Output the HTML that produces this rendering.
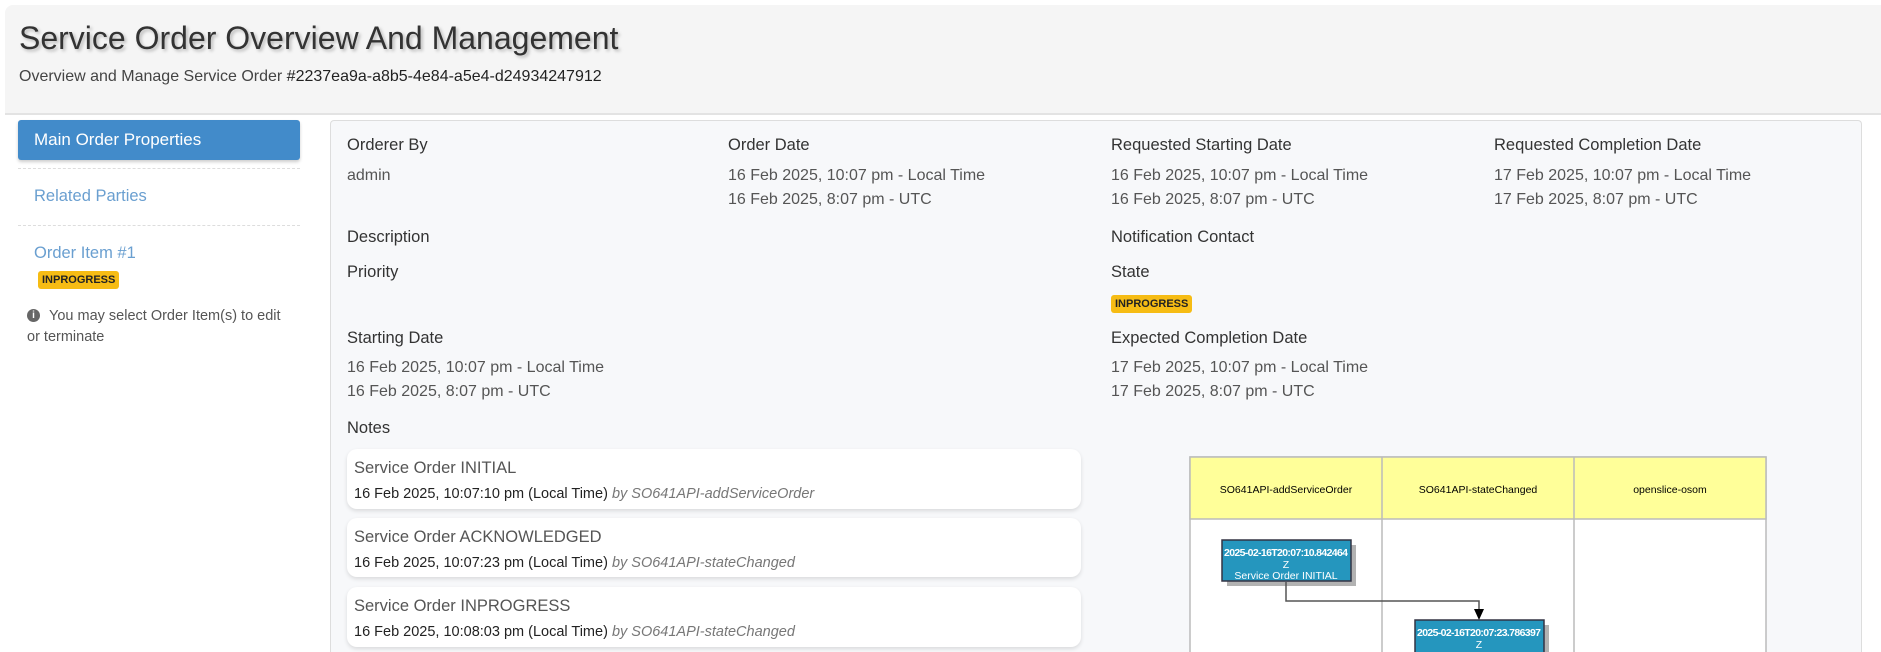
<!DOCTYPE html>
<html style="overflow:hidden;height:652px"><head><style>
body{margin:0;width:1881px;height:652px;overflow:hidden;background:#fff;font-family:"Liberation Sans",sans-serif;color:#333;position:relative}
.a{position:absolute;white-space:nowrap}
.hdr{position:absolute;left:5px;top:5px;width:1876px;height:108px;background:#f5f5f5;border-bottom:2px solid #e3e3e3;border-radius:8px 0 0 0}
.lbl{font-size:16.5px;color:#333}
.val{font-size:16px;color:#555}
.badge{position:absolute;background:#f6bc14;color:#222;font-weight:bold;font-size:11px;border-radius:3px;padding:2px 4px;line-height:14px}
.card{position:absolute;left:347px;width:734px;background:#fff;border-radius:10px;box-shadow:0 2px 4px rgba(0,0,0,.12)}
.card .t{position:absolute;left:7px;top:10px;font-size:16.5px;color:#555;white-space:nowrap}
.card .d{position:absolute;left:7px;top:37px;font-size:14.5px;color:#222;white-space:nowrap}
.card .d i{color:#777}
</style></head><body>
<div class="hdr"></div>
<div class="a" style="left:19px;top:20px;font-size:32px;color:#333;text-shadow:2px 2px 3px rgba(0,0,0,.25)">Service Order Overview And Management</div>
<div class="a" style="left:19px;top:68px;font-size:16px;color:#444">Overview and Manage Service Order <span style="color:#222">#2237ea9a-a8b5-4e84-a5e4-d24934247912</span></div>

<div class="a" style="left:18px;top:120px;width:282px;height:40px;background:#428bca;border-radius:3px;box-shadow:0 2px 3px rgba(0,0,0,.2)"></div>
<div class="a" style="left:34px;top:130px;font-size:17px;color:#fff">Main Order Properties</div>
<div class="a" style="left:18px;top:168px;width:282px;border-top:1px dashed #ddd"></div>
<div class="a" style="left:34px;top:187px;font-size:16.5px;color:#6a9fd0">Related Parties</div>
<div class="a" style="left:18px;top:225px;width:282px;border-top:1px dashed #ddd"></div>
<div class="a" style="left:34px;top:244px;font-size:16.5px;color:#6a9fd0">Order Item #1</div>
<div class="badge" style="left:38px;top:271px">INPROGRESS</div>
<div class="a" style="left:27px;top:309px;width:13px;height:13px;border-radius:50%;background:#666;color:#fff;font-size:10px;font-weight:bold;text-align:center;line-height:13px">i</div>
<div class="a" style="left:49px;top:308px;font-size:14.5px;color:#555">You may select Order Item(s) to edit</div>
<div class="a" style="left:27px;top:329px;font-size:14.5px;color:#555">or terminate</div>

<div class="a" style="left:330px;top:120px;width:1530px;height:540px;background:#f7f8fa;border:1px solid #ddd;border-bottom:none;border-radius:4px 4px 0 0"></div>
<div class="a lbl" style="left:347px;top:136px">Orderer By</div>
<div class="a val" style="left:347px;top:167px">admin</div>
<div class="a lbl" style="left:728px;top:136px">Order Date</div>
<div class="a val" style="left:728px;top:167px">16 Feb 2025, 10:07 pm - Local Time</div>
<div class="a val" style="left:728px;top:191px">16 Feb 2025, 8:07 pm - UTC</div>
<div class="a lbl" style="left:1111px;top:136px">Requested Starting Date</div>
<div class="a val" style="left:1111px;top:167px">16 Feb 2025, 10:07 pm - Local Time</div>
<div class="a val" style="left:1111px;top:191px">16 Feb 2025, 8:07 pm - UTC</div>
<div class="a lbl" style="left:1494px;top:136px">Requested Completion Date</div>
<div class="a val" style="left:1494px;top:167px">17 Feb 2025, 10:07 pm - Local Time</div>
<div class="a val" style="left:1494px;top:191px">17 Feb 2025, 8:07 pm - UTC</div>
<div class="a lbl" style="left:347px;top:228px">Description</div>
<div class="a lbl" style="left:1111px;top:228px">Notification Contact</div>
<div class="a lbl" style="left:347px;top:263px">Priority</div>
<div class="a lbl" style="left:1111px;top:263px">State</div>
<div class="badge" style="left:1111px;top:295px">INPROGRESS</div>
<div class="a lbl" style="left:347px;top:329px">Starting Date</div>
<div class="a val" style="left:347px;top:359px">16 Feb 2025, 10:07 pm - Local Time</div>
<div class="a val" style="left:347px;top:383px">16 Feb 2025, 8:07 pm - UTC</div>
<div class="a lbl" style="left:1111px;top:329px">Expected Completion Date</div>
<div class="a val" style="left:1111px;top:359px">17 Feb 2025, 10:07 pm - Local Time</div>
<div class="a val" style="left:1111px;top:383px">17 Feb 2025, 8:07 pm - UTC</div>
<div class="a lbl" style="left:347px;top:419px">Notes</div>

<div class="card" style="top:449px;height:60px"><div class="t">Service Order INITIAL</div><div class="d">16 Feb 2025, 10:07:10 pm (Local Time) <i>by SO641API-addServiceOrder</i></div></div>
<div class="card" style="top:518px;height:59px"><div class="t">Service Order ACKNOWLEDGED</div><div class="d">16 Feb 2025, 10:07:23 pm (Local Time) <i>by SO641API-stateChanged</i></div></div>
<div class="card" style="top:587px;height:60px"><div class="t">Service Order INPROGRESS</div><div class="d">16 Feb 2025, 10:08:03 pm (Local Time) <i>by SO641API-stateChanged</i></div></div>

<svg class="a" style="left:1180px;top:450px" width="600" height="202" font-family="Liberation Sans,sans-serif">
<rect x="10" y="7" width="576" height="300" fill="#fff" stroke="#bbb" stroke-width="1.5"/>
<rect x="10" y="7" width="576" height="62" fill="#ffff99" stroke="#bbb" stroke-width="1.5"/>
<line x1="202" y1="7" x2="202" y2="210" stroke="#bbb" stroke-width="1.5"/>
<line x1="394" y1="7" x2="394" y2="210" stroke="#bbb" stroke-width="1.5"/>
<text x="106" y="43" font-size="10.5" text-anchor="middle" fill="#000">SO641API-addServiceOrder</text>
<text x="298" y="43" font-size="10.5" text-anchor="middle" fill="#000">SO641API-stateChanged</text>
<text x="490" y="43" font-size="10.5" text-anchor="middle" fill="#000">openslice-osom</text>
<rect x="47" y="95" width="129" height="41" fill="#000" opacity=".3"/>
<rect x="42" y="90" width="129" height="41" fill="#2596be" stroke="#334" stroke-width="1.5"/>
<text x="106" y="106" font-size="10.5" font-weight="bold" text-anchor="middle" fill="#fff" textLength="124">2025-02-16T20:07:10.842464</text>
<text x="106" y="118" font-size="10.5" text-anchor="middle" fill="#fff">Z</text>
<text x="106" y="129" font-size="10.5" text-anchor="middle" fill="#fff">Service Order INITIAL</text>
<polyline points="106,132 106,151 299,151 299,160" fill="none" stroke="#555" stroke-width="1.5"/>
<polygon points="294,159 304,159 299,170" fill="#000"/>
<rect x="240" y="175" width="129" height="42" fill="#000" opacity=".3"/>
<rect x="235" y="170" width="129" height="42" fill="#2596be" stroke="#334" stroke-width="1.5"/>
<text x="299" y="186" font-size="10.5" font-weight="bold" text-anchor="middle" fill="#fff" textLength="124">2025-02-16T20:07:23.786397</text>
<text x="299" y="198" font-size="10.5" text-anchor="middle" fill="#fff">Z</text>
</svg>
</body></html>
